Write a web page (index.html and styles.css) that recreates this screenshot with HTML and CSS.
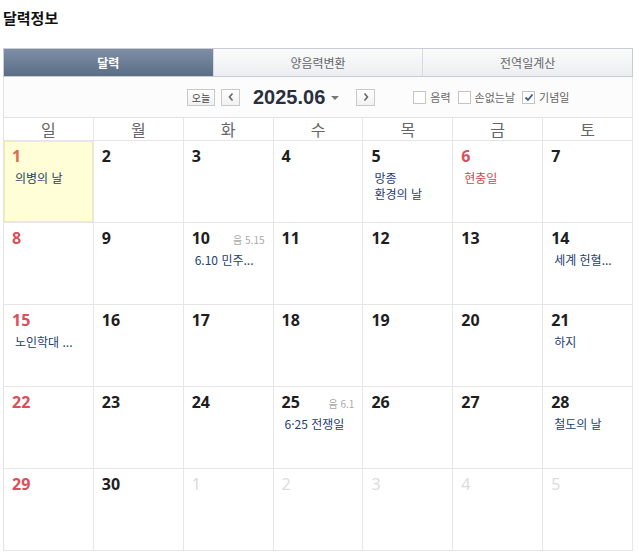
FILE: index.html
```html
<!DOCTYPE html>
<html lang="ko">
<head>
<meta charset="utf-8">
<title>달력정보</title>
<link rel="stylesheet" href="styles.css">
</head>
<body>
<div class="page">
  <h2 class="title">달력정보</h2>
  <div class="tabs">
    <div class="tab active">달력</div>
    <div class="tab">양음력변환</div>
    <div class="tab">전역일계산</div>
  </div>
  <div class="controls">
    <div class="nav">
      <span class="btn today">오늘</span>
      <span class="btn arrow">
        <svg width="8" height="10" viewBox="0 0 8 10"><path d="M5.5 1.5 L2.5 5 L5.5 8.5" fill="none" stroke="#666" stroke-width="1.6"/></svg>
      </span>
      <span class="month">2025.06</span>
      <span class="caret"></span>
      <span class="btn arrow">
        <svg width="8" height="10" viewBox="0 0 8 10"><path d="M2.5 1.5 L5.5 5 L2.5 8.5" fill="none" stroke="#666" stroke-width="1.6"/></svg>
      </span>
    </div>
    <div class="opts">
      <label class="opt"><span class="cb"></span>음력</label>
      <label class="opt"><span class="cb"></span>손없는날</label>
      <label class="opt"><span class="cb on"><svg width="10" height="9" viewBox="0 0 10 9"><path d="M1.5 4.5 L4 7 L8.5 1.5" fill="none" stroke="#3b5b8f" stroke-width="1.8"/></svg></span>기념일</label>
    </div>
  </div>
  <div class="cal">
    <div class="wd">일</div><div class="wd">월</div><div class="wd">화</div><div class="wd">수</div><div class="wd">목</div><div class="wd">금</div><div class="wd">토</div>

    <div class="day sun now"><div class="top"><span class="num first">1</span></div><div class="ev">의병의 날</div></div>
    <div class="day"><div class="top"><span class="num">2</span></div></div>
    <div class="day"><div class="top"><span class="num">3</span></div></div>
    <div class="day"><div class="top"><span class="num">4</span></div></div>
    <div class="day"><div class="top"><span class="num">5</span></div><div class="ev">망종<br>환경의 날</div></div>
    <div class="day hol"><div class="top"><span class="num">6</span></div><div class="ev red">현충일</div></div>
    <div class="day"><div class="top"><span class="num">7</span></div></div>

    <div class="day sun"><div class="top"><span class="num">8</span></div></div>
    <div class="day"><div class="top"><span class="num">9</span></div></div>
    <div class="day"><div class="top"><span class="num">10</span><span class="lunar">음 5.15</span></div><div class="ev">6.10 민주...</div></div>
    <div class="day"><div class="top"><span class="num">11</span></div></div>
    <div class="day"><div class="top"><span class="num">12</span></div></div>
    <div class="day"><div class="top"><span class="num">13</span></div></div>
    <div class="day"><div class="top"><span class="num">14</span></div><div class="ev">세계 헌혈...</div></div>

    <div class="day sun"><div class="top"><span class="num">15</span></div><div class="ev">노인학대 ...</div></div>
    <div class="day"><div class="top"><span class="num">16</span></div></div>
    <div class="day"><div class="top"><span class="num">17</span></div></div>
    <div class="day"><div class="top"><span class="num">18</span></div></div>
    <div class="day"><div class="top"><span class="num">19</span></div></div>
    <div class="day"><div class="top"><span class="num">20</span></div></div>
    <div class="day"><div class="top"><span class="num">21</span></div><div class="ev">하지</div></div>

    <div class="day sun"><div class="top"><span class="num">22</span></div></div>
    <div class="day"><div class="top"><span class="num">23</span></div></div>
    <div class="day"><div class="top"><span class="num">24</span></div></div>
    <div class="day"><div class="top"><span class="num">25</span><span class="lunar">음 6.1</span></div><div class="ev">6·25 전쟁일</div></div>
    <div class="day"><div class="top"><span class="num">26</span></div></div>
    <div class="day"><div class="top"><span class="num">27</span></div></div>
    <div class="day"><div class="top"><span class="num">28</span></div><div class="ev">철도의 날</div></div>

    <div class="day sun"><div class="top"><span class="num">29</span></div></div>
    <div class="day"><div class="top"><span class="num">30</span></div></div>
    <div class="day other"><div class="top"><span class="num">1</span></div></div>
    <div class="day other"><div class="top"><span class="num">2</span></div></div>
    <div class="day other"><div class="top"><span class="num">3</span></div></div>
    <div class="day other"><div class="top"><span class="num">4</span></div></div>
    <div class="day other"><div class="top"><span class="num">5</span></div></div>
  </div>
</div>
</body>
</html>
```
FILE: styles.css
```css
* { box-sizing: border-box; }
html, body { margin: 0; padding: 0; background: #fff; }
body {
  font-family: "Noto Sans CJK KR", "Noto Sans", sans-serif;
  color: #222;
}
.page { width: 630px; margin-left: 3px; }
.title {
  margin: 0;
  height: 48px;
  padding-top: 8px;
  font-size: 15px;
  font-weight: bold;
  line-height: 20px;
  color: #111;
}
.tabs {
  display: flex;
  height: 29px;
  border: 1px solid #c9cdd3;
  border-bottom: 1px solid #c7ccd3;
}
.tab {
  flex: 1;
  display: flex;
  align-items: center;
  justify-content: center;
  font-size: 12px;
  color: #666;
  background: linear-gradient(#fbfbfc, #eceef1);
  border-left: 1px solid #d6d9de;
}
.tab:first-child { border-left: 0; }
.tab.active {
  background: linear-gradient(#7d8ea6, #5b6c86);
  color: #fff;
  font-weight: bold;
}
.controls {
  height: 40px;
  display: flex;
  align-items: center;
  border-left: 1px solid #e4e4e4;
  border-right: 1px solid #e4e4e4;
  background: #fcfcfc;
  padding-left: 183px;
}
.nav { display: flex; align-items: center; }
.btn {
  display: inline-flex;
  align-items: center;
  justify-content: center;
  height: 17px;
  border: 1px solid #c9c9c9;
  background: linear-gradient(#ffffff, #f1f1f1);
  font-size: 10px;
  color: #444;
}
.today { width: 28px; margin-right: 6px; }
.arrow { width: 19px; }
.month {
  font-family: "Liberation Sans", "DejaVu Sans", sans-serif;
  font-weight: bold;
  font-size: 20px;
  color: #2b2f3d;
  margin-left: 13px;
}
.caret {
  width: 0; height: 0;
  border-left: 4px solid transparent;
  border-right: 4px solid transparent;
  border-top: 4px solid #777;
  margin: 2px 17px 0 6px;
}
.opts { display: flex; align-items: center; margin-left: 38px; }
.opt {
  display: inline-flex;
  align-items: center;
  font-size: 11px;
  color: #666;
  margin-right: 7px;
}
.cb {
  width: 13px; height: 13px;
  border: 1px solid #c4c4c4;
  background: #fff;
  margin-right: 4px;
  display: inline-flex;
  align-items: center;
  justify-content: center;
}
.cal {
  display: grid;
  grid-template-columns: repeat(7, 1fr);
  grid-template-rows: 23px repeat(5, 82px);
  border-top: 1px solid #e4e4e4;
  border-left: 1px solid #e4e4e4;
}
.wd, .day {
  border-right: 1px solid #e6e6e6;
  border-bottom: 1px solid #e6e6e6;
}
.wd {
  display: flex;
  align-items: center;
  justify-content: center;
  font-size: 16px;
  color: #666;
  background: #fff;
}
.day { padding: 6px 8px 0 8px; background: #fff; }
.top { display: flex; justify-content: space-between; align-items: baseline; height: 20px; }
.num {
  font-family: "Noto Sans", "DejaVu Sans", sans-serif;
  font-weight: bold;
  font-size: 16px;
  line-height: 18px;
  color: #1e1e1e;
}
.sun .num, .hol .num { color: #d9505a; }
.num.first { color: #dd6a4f; }
.other .num { color: #dcdcdc; font-weight: normal; }
.now { background: #fffed6; box-shadow: inset 0 0 0 1px #f0ecb4; }
.lunar { font-size: 10px; color: #aaa; }
.ev {
  margin-top: 3px;
  padding-left: 3px;
  font-size: 12px;
  line-height: 16px;
  color: #24406e;
  white-space: nowrap;
}
.ev.red { color: #d6454f; }
```
